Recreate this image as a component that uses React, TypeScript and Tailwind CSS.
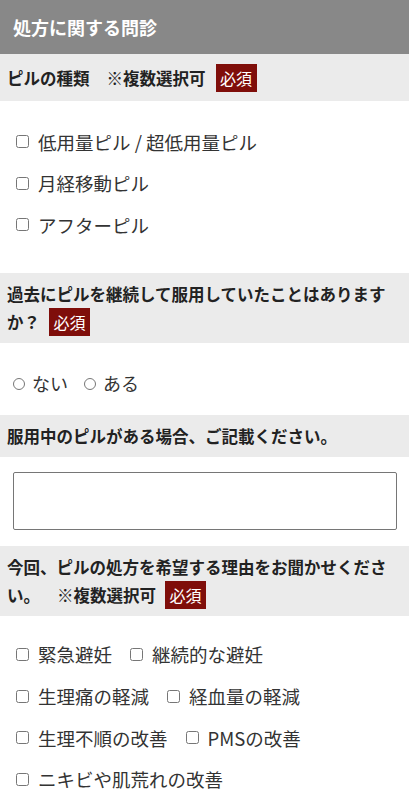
import React from 'react';

const font = "font-['Noto_Sans_CJK_JP','Noto_Sans',sans-serif]";

const Badge: React.FC<{ className?: string }> = ({ className = '' }) => (
  <span className={`inline-block bg-[#7f0e0a] text-white font-normal text-[16px] leading-[28px] px-[4.5px] align-top ${className}`}>
    必須
  </span>
);

const SectionHead: React.FC<{ className?: string; children: React.ReactNode }> = ({ className = '', children }) => (
  <div className={`bg-[#ebebeb] px-[7px] text-[16.5px] font-bold leading-[28px] text-[#222] ${className}`}>
    {children}
  </div>
);

const Check: React.FC<{ label: string; last?: boolean }> = ({ label, last }) => (
  <label className={`flex items-center gap-[9px] ${last ? '' : 'mr-[18px]'}`}>
    <input type="checkbox" className="m-0 w-[13px] h-[13px]" />
    <span>{label}</span>
  </label>
);

const Radio: React.FC<{ label: string }> = ({ label }) => (
  <label className="flex items-center gap-[7px] mr-[16px]">
    <input type="radio" name="past" className="m-0 w-[12px] h-[12px] mt-[3px]" />
    <span>{label}</span>
  </label>
);

export default function App() {
  const pills = ['低用量ピル / 超低用量ピル', '月経移動ピル', 'アフターピル'];
  const reasons = [
    ['緊急避妊', '継続的な避妊'],
    ['生理痛の軽減', '経血量の軽減'],
    ['生理不順の改善', 'PMSの改善'],
    ['ニキビや肌荒れの改善'],
  ];

  return (
    <div className={`w-full bg-white ${font}`}>
      {/* Title */}
      <div className="bg-[#888888] h-[54px] flex items-center px-[13px] text-white font-bold text-[18px]">
        処方に関する問診
      </div>

      {/* Pill type */}
      <SectionHead className="py-[9.5px]">
        ピルの種類<span className="ml-[17px]">※複数選択可</span>
        <Badge className="ml-[10px]" />
      </SectionHead>
      <div className="pt-[20px] pb-[27px] pl-[16px] text-[18.5px] text-[#333] leading-[28px]">
        {pills.map((p) => (
          <div key={p} className="h-[41.5px] flex items-center">
            <Check label={p} last />
          </div>
        ))}
      </div>

      {/* Past use */}
      <SectionHead className="py-[7px]">
        過去にピルを継続して服用していたことはありますか？
        <Badge className="ml-[9px]" />
      </SectionHead>
      <div className="pt-[26px] pb-[18px] pl-[13px] flex items-center h-[72px] text-[18px] text-[#333] leading-[28px]">
        <Radio label="ない" />
        <Radio label="ある" />
      </div>

      {/* Current pill */}
      <SectionHead className="py-[7px]">服用中のピルがある場合、ご記載ください。</SectionHead>
      <div className="pt-[15px] pb-[16px]">
        <textarea className="block ml-[13px] w-[384px] h-[58px] border border-[#767676] rounded-[2px] resize-none" />
      </div>

      {/* Reasons */}
      <SectionHead className="py-[7px]">
        今回、ピルの処方を希望する理由をお聞かせください。<span className="ml-[17px]">※複数選択可</span>
        <Badge className="ml-[9px]" />
      </SectionHead>
      <div className="pt-[18px] pl-[16px] text-[18.5px] text-[#333] leading-[28px]">
        {reasons.map((row, i) => (
          <div key={i} className="h-[41.7px] flex items-center">
            {row.map((r, j) => (
              <Check key={r} label={r} last={j === row.length - 1} />
            ))}
          </div>
        ))}
      </div>
    </div>
  );
}
